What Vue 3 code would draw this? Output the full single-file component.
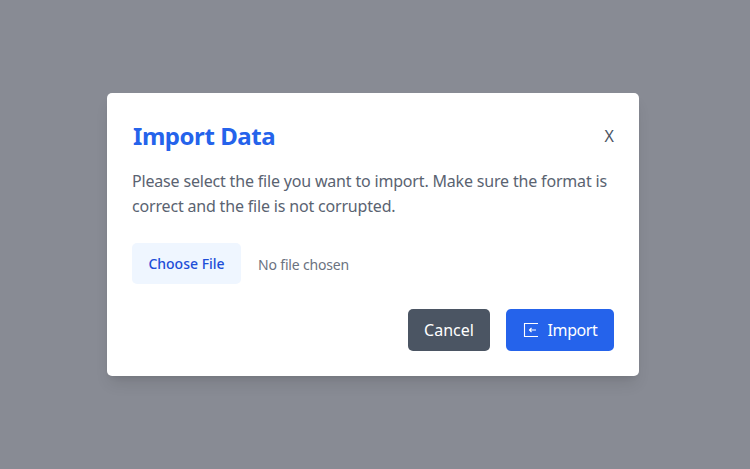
<template>
  <div class="overlay">
    <div class="modal" role="dialog" aria-labelledby="import-title">
      <header class="modal__head">
        <h2 id="import-title" class="modal__title">Import Data</h2>
        <button type="button" class="modal__close">X</button>
      </header>
      <p class="modal__text">
        Please select the file you want to import. Make sure the format is correct and the file is not corrupted.
      </p>
      <div class="file">
        <button type="button" class="file__btn">Choose File</button>
        <span class="file__name">No file chosen</span>
      </div>
      <footer class="modal__actions">
        <button type="button" class="btn btn--cancel">Cancel</button>
        <button type="button" class="btn btn--import">
          <svg class="btn__icon" viewBox="0 0 16 16" fill="none" stroke="currentColor" stroke-width="1.1" aria-hidden="true">
            <path d="M15 1.5H1.5v13H15" />
            <path d="M13 8H6.5M8.5 6 6.5 8l2 2" />
          </svg>
          Import
        </button>
      </footer>
    </div>
  </div>
</template>

<script setup>
</script>

<style>
body {
  margin: 0;
}
</style>

<style scoped>
.overlay {
  box-sizing: border-box;
  height: 469px;
  padding-right: 4px;
  display: flex;
  align-items: center;
  justify-content: center;
  background: #888b94;
  font-family: "Noto Sans", "Open Sans", sans-serif;
}
.modal {
  box-sizing: border-box;
  width: 532px;
  height: 283px;
  padding: 25px;
  background: #fff;
  border-radius: 5px;
  box-shadow: 0 10px 15px -3px rgba(0, 0, 0, 0.1), 0 4px 6px -4px rgba(0, 0, 0, 0.1);
}
.modal__head {
  display: flex;
  justify-content: space-between;
  align-items: center;
  height: 36px;
}
.modal__title {
  margin: 0;
  padding-left: 1px;
  font-size: 24px;
  line-height: 36px;
  font-weight: 700;
  letter-spacing: -0.45px;
  color: #2563eb;
}
.modal__close {
  padding: 0;
  border: 0;
  background: none;
  font: inherit;
  font-size: 16px;
  color: #4b5563;
}
.modal__text {
  margin: 15px 0 0;
  font-size: 16px;
  line-height: 25px;
  letter-spacing: -0.18px;
  color: #5a6371;
}
.file {
  display: flex;
  align-items: center;
  gap: 17px;
  margin-top: 24px;
}
.file__btn {
  width: 109px;
  height: 41px;
  padding: 0;
  border: 0;
  border-radius: 5px;
  background: #eff6ff;
  color: #1d4ed8;
  font: inherit;
  font-size: 14px;
  font-weight: 500;
}
.file__name {
  position: relative;
  top: 1px;
  font-size: 14px;
  letter-spacing: -0.17px;
  color: #6b7280;
}
.modal__actions {
  display: flex;
  justify-content: flex-end;
  gap: 16px;
  margin-top: 25px;
}
.btn {
  display: flex;
  align-items: center;
  justify-content: center;
  gap: 9px;
  height: 42px;
  padding: 0;
  border: 0;
  border-radius: 5px;
  color: #fff;
  font: inherit;
  font-size: 16px;
}
.btn--cancel {
  width: 82px;
  background: #4b5563;
}
.btn--import {
  width: 108px;
  background: #2563eb;
  letter-spacing: -0.4px;
}
.btn__icon {
  width: 16px;
  height: 16px;
}
</style>
